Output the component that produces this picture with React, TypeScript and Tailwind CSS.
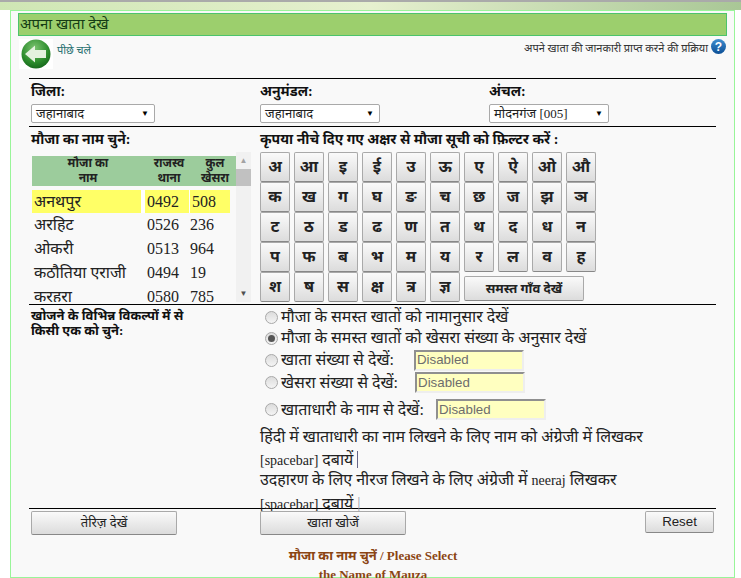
const letterRows = [
  ["अ", "आ", "इ", "ई", "उ", "ऊ", "ए", "ऐ", "ओ", "औ"],
  ["क", "ख", "ग", "घ", "ङ", "च", "छ", "ज", "झ", "ञ"],
  ["ट", "ठ", "ड", "ढ", "ण", "त", "थ", "द", "ध", "न"],
  ["प", "फ", "ब", "भ", "म", "य", "र", "ल", "व", "ह"],
  ["श", "ष", "स", "क्ष", "त्र", "ज्ञ"],
];

const mauzas = [
  ["अनथपुर", "0492", "508"],
  ["अरहिट", "0526", "236"],
  ["ओकरी", "0513", "964"],
  ["कठौतिया एराजी", "0494", "19"],
  ["करहरा", "0580", "785"],
];

function FakeSelect({ value, width }: { value: string; width: string }) {
  return (
    <div className={`flex h-[19px] items-center justify-between rounded-[2px] border border-[#a9a9a9] bg-white pl-[4px] pr-[5px] text-[13px] text-[#222] ${width}`}>
      <span>{value}</span>
      <span className="text-[8px] text-black">▼</span>
    </div>
  );
}

function Radio({ checked }: { checked?: boolean }) {
  return (
    <span className="mr-[3px] flex h-[13px] w-[13px] shrink-0 items-center justify-center rounded-full border border-[#a8a8a8] bg-gradient-to-b from-[#dcdcdc] to-[#f4f4f4]">
      {checked && <span className="h-[7px] w-[7px] rounded-full bg-[#555]" />}
    </span>
  );
}

function DisabledInput({ className }: { className: string }) {
  return (
    <div className={`flex h-[21px] w-[110px] items-center border-2 border-t-[#8f8f8f] border-l-[#8f8f8f] border-r-[#eee] border-b-[#eee] bg-[#ffffc0] pl-[1px] text-[13.3px] text-[#6d6d6d] font-['Liberation_Sans',sans-serif] ${className}`}>
      Disabled
    </div>
  );
}

function GrayButton({ children, className }: { children: React.ReactNode; className: string }) {
  return (
    <div className={`flex items-center justify-center rounded-[2px] border border-[#a9a9a9] border-b-[#888] bg-gradient-to-b from-[#fafafa] to-[#dcdcdc] text-[#222] ${className}`}>
      {children}
    </div>
  );
}

function BackIcon() {
  return (
    <svg width="34" height="30" viewBox="0 0 34 30">
      <defs>
        <radialGradient id="backball" cx="0.45" cy="0.3" r="0.8">
          <stop offset="0" stopColor="#7cc470" />
          <stop offset="0.6" stopColor="#2c8c2c" />
          <stop offset="1" stopColor="#0d5a14" />
        </radialGradient>
      </defs>
      <rect width="34" height="30" fill="#fff" />
      <circle cx="17" cy="15" r="14.5" fill="url(#backball)" />
      <path d="M6 15 L16 6.5 L16 11 L27 11 L27 19 L16 19 L16 23.5 Z" fill="#e4f2de" />
    </svg>
  );
}

function HelpIcon() {
  return (
    <div className="flex h-[15px] w-[15px] items-center justify-center rounded-full bg-gradient-to-b from-[#3f8fd0] to-[#0b4f96] text-[12px] font-bold leading-none text-white font-['Liberation_Sans',sans-serif]">
      ?
    </div>
  );
}

function Rule() {
  return <div className="h-[1px] bg-black" />;
}

export default function App() {
  return (
    <div className="h-[578px] w-[741px] overflow-hidden bg-white font-['Liberation_Serif','Noto_Sans',serif]">
      <div className="h-[10px] border-t-2 border-[#aaa] bg-gradient-to-r from-[#cfe6b4] via-[#e6f0cf] to-[#a9c796]" />
      <div className="mx-[10px] mr-[6px] h-[568px] border border-[#99f599] bg-[#f9f9f9] pl-[7px] pr-[7px] pt-[2px]">
        <div className="flex h-[23px] items-center border border-[#4cc46c] bg-[#9ccf6d] pl-[1px] text-[15px] text-[#143c14]">
          अपना खाता देखे
        </div>

        <div className="flex h-[42px] justify-between pl-[1px] pt-[3px]">
          <div className="flex items-start">
            <BackIcon />
            <span className="ml-[4px] mt-[3px] text-[11px] text-[#1f6f6f]">पीछे चले</span>
          </div>
          <div className="flex items-start pr-[1px]">
            <span className="mt-[1px] text-[11px] text-[#333]">अपने खाता की जानकारी प्राप्त करने की प्रक्रिया</span>
            <span className="ml-[3px]"><HelpIcon /></span>
          </div>
        </div>

        <div className="ml-[11px] mr-[11px]">
          <Rule />
          <div className="grid h-[47px] grid-cols-[229px_229px_1fr] pl-[2px]">
            <div>
              <div className="h-[25px] pt-[2px] text-[14px] font-bold text-[#111]">जिला:</div>
              <FakeSelect value="जहानाबाद" width="w-[124px]" />
            </div>
            <div>
              <div className="h-[25px] pt-[2px] text-[14px] font-bold text-[#111]">अनुमंडल:</div>
              <FakeSelect value="जहानाबाद" width="w-[120px]" />
            </div>
            <div>
              <div className="h-[25px] pt-[2px] text-[14px] font-bold text-[#111]">अंचल:</div>
              <FakeSelect value="मोदनगंज [005]" width="w-[120px]" />
            </div>
          </div>
          <Rule />

          <div className="grid h-[177px] grid-cols-[229px_1fr] pl-[2px]">
            <div>
              <div className="h-[25px] pt-[2px] text-[14px] font-bold text-[#111]">मौजा का नाम चुने:</div>
              <div className="flex h-[150px] w-[221px] items-stretch pl-[1px]">
                <div className="w-[204px] overflow-hidden pt-[4px]">
                  <div className="grid h-[30px] grid-cols-[112px_50px_42px] overflow-hidden bg-[#9ccc9c] text-center text-[12px] font-bold leading-[15px] text-[#222]">
                    <span>मौजा का<br />नाम</span>
                    <span>राजस्व<br />थाना</span>
                    <span>कुल<br />खेसरा</span>
                  </div>
                  <div className="mt-[4px] flex h-[23px] w-[198px] gap-[1px] bg-[#ffff66] text-[16px] text-[#222]">
                    <span className="w-[108px] border-r-[1px] border-[#ffff66] pl-[2px]">{mauzas[0][0]}</span>
                    <span className="w-[4px] bg-white" />
                    <span className="w-[42px] pl-[1px]">{mauzas[0][1]}</span>
                    <span className="w-[1px] bg-white" />
                    <span className="pl-[1px]">{mauzas[0][2]}</span>
                  </div>
                  {mauzas.slice(1).map((row) => (
                    <div key={row[1]} className="flex h-[24px] w-[198px] items-center text-[16px] text-[#222]">
                      <span className="w-[114px] pl-[2px]">{row[0]}</span>
                      <span className="w-[43px] pl-[1px]">{row[1]}</span>
                      <span className="pl-[1px]">{row[2]}</span>
                    </div>
                  ))}
                </div>
                <div className="flex w-[15px] flex-col justify-between bg-[#f1f1f1]">
                  <div>
                    <div className="flex h-[17px] items-center justify-center text-[8px] text-[#a3a3a3]">▲</div>
                    <div className="h-[17px] bg-[#c1c1c1]" />
                  </div>
                  <div className="flex h-[17px] items-center justify-center text-[8px] text-[#505050]">▼</div>
                </div>
              </div>
            </div>

            <div>
              <div className="h-[25px] pt-[2px] text-[14px] font-bold text-[#111]">कृपया नीचे दिए गए अक्षर से मौजा सूची को फ़िल्टर करें :</div>
              <div className="flex flex-col">
                {letterRows.map((row, i) => (
                  <div key={i} className="flex h-[30px] gap-[4px]">
                    {row.map((ch) => (
                      <GrayButton key={ch} className="h-[30px] w-[30px] text-[16px] font-bold">{ch}</GrayButton>
                    ))}
                    {i === 4 && (
                      <GrayButton className="ml-[0px] mt-[4px] h-[25px] w-[120px] text-[13px] font-bold">समस्त गाँव देखें</GrayButton>
                    )}
                  </div>
                ))}
              </div>
            </div>
          </div>
          <Rule />

          <div className="grid h-[203px] grid-cols-[229px_1fr] pl-[2px]">
            <div className="pt-[3px] text-[13px] font-bold leading-[15px] text-[#111]">
              खोजने के विभिन्न विकल्पों में से<br />किसी एक को चुने:
            </div>
            <div className="text-[16px] text-[#222]">
              <div className="flex h-[22px] items-center pl-[5px] pt-[2px]"><Radio />मौजा के समस्त खातों को नामानुसार देखें</div>
              <div className="flex h-[22px] items-center pl-[5px]"><Radio checked />मौजा के समस्त खातों को खेसरा संख्या के अनुसार देखें</div>
              <div className="flex h-[22px] items-center pl-[5px]"><Radio />खाता संख्या से देखें:<DisabledInput className="ml-[20px]" /></div>
              <div className="flex h-[23px] items-center pl-[5px]"><Radio />खेसरा संख्या से देखें:<DisabledInput className="ml-[17px]" /></div>
              <div className="flex h-[31px] items-center pl-[5px]"><Radio />खाताधारी के नाम से देखें:<DisabledInput className="ml-[12px]" /></div>
              <div className="leading-[23px]">
                <div>हिंदी में खाताधारी का नाम लिखने के लिए नाम को अंग्रेजी में लिखकर</div>
                <div><span className="text-[14px]">[spacebar]</span> दबायें<span className="border-r border-[#668]">&nbsp;</span></div>
                <div className="-mt-[4px]">उदहारण के लिए नीरज लिखने के लिए अंग्रेजी में <span className="text-[14px]">neeraj</span> लिखकर</div>
                <div><span className="text-[14px]">[spacebar]</span> दबायें <span className="text-[#99a]">|</span></div>
              </div>
            </div>
          </div>
          <Rule />

          <div className="grid grid-cols-[229px_1fr_auto] pl-[2px] pr-[2px] pt-[2px]">
            <GrayButton className="h-[24px] w-[146px] text-[13px]">तेरिज़ देखें</GrayButton>
            <GrayButton className="h-[24px] w-[146px] text-[13px]">खाता खोजें</GrayButton>
            <GrayButton className="h-[22px] w-[69px] text-[13.3px] font-['Liberation_Sans',sans-serif]">Reset</GrayButton>
          </div>
        </div>

        <div className="ml-[1px] mt-[11px] text-center text-[13px] font-bold leading-[19px] text-[#8b4513]">
          मौजा का नाम चुनें / Please Select<br />the Name of Mauza
        </div>
      </div>
    </div>
  );
}
